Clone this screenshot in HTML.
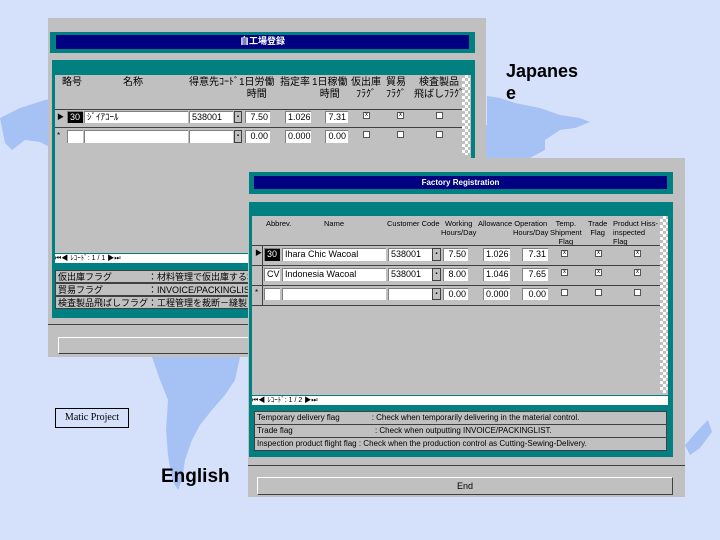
<!DOCTYPE html>
<html><head><meta charset="utf-8">
<style>
*{margin:0;padding:0;box-sizing:border-box}
body{width:720px;height:540px;background:#d5e1fb;position:relative;overflow:hidden;font-family:"Liberation Sans","Noto Sans CJK JP",sans-serif}
.a{position:absolute}
.g{background:#c0c0c0}
.t{background:#008080}
.n{background:#000080;color:#fff;font-size:8px;text-align:center;font-weight:bold;line-height:13px}
.w{background:#fff;border-top:1px solid #808080;border-left:1px solid #808080;font-size:9px;line-height:11px;padding-left:2px;white-space:nowrap;overflow:hidden}
.r{text-align:right;padding-right:2px}
.h{font-size:7.5px;line-height:9px;text-align:center;white-space:nowrap;color:#000}
.cb{width:7px;height:7px;background:#fff;border:1px solid #555;font-size:6px;line-height:5px;text-align:center}
.dd{background:#c0c0c0;border:1px solid #404040;font-size:6px;text-align:center;line-height:10px}
.info{font-size:8px;line-height:12px;white-space:nowrap;overflow:hidden;padding-left:2px;border:1px solid #404040;background:#c0c0c0}
.chk{background:repeating-conic-gradient(#fff 0 25%,#c0c0c0 0 50%) 0 0/6px 6px}
.ln{background:#404040;height:1px}
.jh{font-size:10px;line-height:12px}
</style></head><body>
<svg class="a" style="left:0;top:0" width="720" height="540">
<path fill="#a6c2f5" d="M0,118 L20,108 L45,100 L55,98 L55,150 L40,142 L25,140 L12,150 L5,143 Z"/>
<path fill="#a6c2f5" d="M487,96 L500,98 L515,103 L540,108 L560,115 L580,118 L590,122 L575,128 L560,130 L545,140 L545,150 L530,158 L505,160 L487,160 Z"/>
<path fill="#a6c2f5" d="M470,130 L487,125 L487,160 L468,160 Z"/>
<path fill="#a6c2f5" d="M152,357 L240,357 L235,380 L225,395 L212,410 L200,425 L192,440 L185,460 L182,480 L178,490 L172,480 L168,455 L166,430 L168,400 L160,380 Z"/>
<path fill="#a6c2f5" d="M685,445 L700,428 L708,420 L712,432 L700,448 L690,455 Z"/>
</svg>

<!-- Window 1 -->
<div class="a g" style="left:48px;top:18px;width:438px;height:339px"></div>
<div class="a t" style="left:50px;top:32px;width:425px;height:21px"></div>
<div class="a n" style="left:56px;top:35px;width:413px;height:14px;font-size:9px">自工場登録</div>
<div class="a t" style="left:52px;top:60px;width:423px;height:258px"></div>
<div class="a g" style="left:55px;top:75px;width:416px;height:178px"></div>
<div class="a h jh" style="left:62px;top:77px">略号</div>
<div class="a h jh" style="left:123px;top:77px">名称</div>
<div class="a h jh" style="left:189px;top:77px">得意先ｺｰﾄﾞ</div>
<div class="a h jh" style="left:239px;top:77px">1日労働<br>時間</div>
<div class="a h jh" style="left:280px;top:77px">指定率</div>
<div class="a h jh" style="left:312px;top:77px">1日稼働<br>時間</div>
<div class="a h jh" style="left:351px;top:77px">仮出庫<br>ﾌﾗｸﾞ</div>
<div class="a h jh" style="left:386px;top:77px">貿易<br>ﾌﾗｸﾞ</div>
<div class="a h jh" style="left:414px;top:77px">検査製品<br>飛ばしﾌﾗｸﾞ</div>
<div class="a ln" style="left:55px;top:109px;width:407px"></div>
<div class="a ln" style="left:55px;top:127px;width:407px"></div>
<div class="a" style="left:57px;top:112px;font-size:7px">▶</div>
<div class="a" style="left:57px;top:131px;font-size:8px">*</div>
<div class="a w" style="left:67px;top:111px;width:16px;height:12px;background:#000;color:#fff">30</div>
<div class="a w" style="left:84px;top:111px;width:104px;height:12px">ｼﾞｲｱｺｰﾙ</div>
<div class="a w" style="left:189px;top:111px;width:44px;height:12px">538001</div>
<div class="a dd" style="left:234px;top:111px;width:8px;height:12px">▪</div>
<div class="a w r" style="left:245px;top:111px;width:25px;height:12px">7.50</div>
<div class="a w r" style="left:285px;top:111px;width:26px;height:12px">1.026</div>
<div class="a w r g" style="left:325px;top:111px;width:23px;height:12px">7.31</div>
<div class="a cb" style="left:363px;top:112px">x</div><div class="a cb" style="left:397px;top:112px">x</div><div class="a cb" style="left:436px;top:112px"></div>
<div class="a w" style="left:67px;top:130px;width:16px;height:13px"></div>
<div class="a w" style="left:84px;top:130px;width:104px;height:13px"></div>
<div class="a w" style="left:189px;top:130px;width:44px;height:13px"></div>
<div class="a dd" style="left:234px;top:130px;width:8px;height:13px">▪</div>
<div class="a w r" style="left:245px;top:130px;width:25px;height:13px">0.00</div>
<div class="a w r" style="left:285px;top:130px;width:26px;height:13px">0.000</div>
<div class="a w r g" style="left:325px;top:130px;width:23px;height:13px">0.00</div>
<div class="a cb" style="left:363px;top:131px"></div><div class="a cb" style="left:397px;top:131px"></div><div class="a cb" style="left:436px;top:131px"></div>
<div class="a chk" style="left:462px;top:75px;width:8px;height:80px"></div>
<div class="a" style="left:55px;top:254px;width:420px;height:9px;background:#fff;font-size:7px;line-height:9px">⏮◀ ﾚｺｰﾄﾞ: 1 / 1 ▶⏭</div>
<div class="a info" style="left:55px;top:270px;width:416px;height:13px;font-size:9px">仮出庫フラグ　　　　：材料管理で仮出庫する場合</div>
<div class="a info" style="left:55px;top:283px;width:416px;height:13px;font-size:9px">貿易フラグ　　　　　：INVOICE/PACKINGLIST</div>
<div class="a info" style="left:55px;top:296px;width:416px;height:13px;font-size:9px">検査製品飛ばしフラグ：工程管理を裁断－縫製－</div>
<div class="a ln" style="left:48px;top:324px;width:438px"></div>
<div class="a" style="left:58px;top:337px;width:420px;height:17px;border:1px solid #404040;border-top-color:#fff;border-left-color:#fff"></div>

<div class="a" style="left:506px;top:60px;font-size:18px;font-weight:bold;line-height:22px;color:#000">Japanes<br>e</div>
<div class="a" style="left:55px;top:408px;width:74px;height:20px;border:1px solid #000;font-family:'Liberation Serif',serif;font-size:10px;line-height:18px;text-align:center">Matic Project</div>
<div class="a" style="left:161px;top:466px;font-size:19px;font-weight:bold;color:#000">English</div>

<!-- Window 2 -->
<div class="a g" style="left:248px;top:158px;width:437px;height:339px"></div>
<div class="a t" style="left:249px;top:172px;width:424px;height:22px"></div>
<div class="a n" style="left:254px;top:176px;width:413px;height:13px">Factory Registration</div>
<div class="a t" style="left:249px;top:202px;width:424px;height:255px"></div>
<div class="a g" style="left:252px;top:216px;width:416px;height:179px"></div>
<div class="a h" style="left:266px;top:219px">Abbrev.</div>
<div class="a h" style="left:324px;top:219px">Name</div>
<div class="a h" style="left:387px;top:219px">Customer Code</div>
<div class="a h" style="left:441px;top:219px">Working<br>Hours/Day</div>
<div class="a h" style="left:478px;top:219px">Allowance</div>
<div class="a h" style="left:513px;top:219px">Operation<br>Hours/Day</div>
<div class="a h" style="left:550px;top:219px">Temp.<br>Shipment<br>Flag</div>
<div class="a h" style="left:588px;top:219px">Trade<br>Flag</div>
<div class="a h" style="left:613px;top:219px;text-align:left">Product Hiss-<br>inspected<br>Flag</div>
<div class="a ln" style="left:252px;top:245px;width:408px"></div>
<div class="a ln" style="left:252px;top:265px;width:408px"></div>
<div class="a ln" style="left:252px;top:285px;width:408px"></div>
<div class="a ln" style="left:252px;top:305px;width:408px"></div>
<div class="a" style="left:262px;top:245px;width:1px;height:60px;background:#404040"></div>
<div class="a" style="left:255px;top:248px;font-size:7px">▶</div>
<div class="a" style="left:255px;top:288px;font-size:8px">*</div>
<div class="a w" style="left:264px;top:248px;width:16px;height:13px;background:#000;color:#fff">30</div>
<div class="a w" style="left:282px;top:248px;width:104px;height:13px">Ihara Chic Wacoal</div>
<div class="a w" style="left:388px;top:248px;width:44px;height:13px">538001</div>
<div class="a dd" style="left:432px;top:248px;width:9px;height:13px">▪</div>
<div class="a w r" style="left:443px;top:248px;width:25px;height:13px">7.50</div>
<div class="a w r" style="left:483px;top:248px;width:27px;height:13px">1.026</div>
<div class="a w r g" style="left:522px;top:248px;width:26px;height:13px">7.31</div>
<div class="a cb" style="left:561px;top:250px">x</div><div class="a cb" style="left:595px;top:250px">x</div><div class="a cb" style="left:634px;top:250px">x</div>
<div class="a w" style="left:264px;top:268px;width:16px;height:13px">CV</div>
<div class="a w" style="left:282px;top:268px;width:104px;height:13px">Indonesia Wacoal</div>
<div class="a w" style="left:388px;top:268px;width:44px;height:13px">538001</div>
<div class="a dd" style="left:432px;top:268px;width:9px;height:13px">▪</div>
<div class="a w r" style="left:443px;top:268px;width:25px;height:13px">8.00</div>
<div class="a w r" style="left:483px;top:268px;width:27px;height:13px">1.046</div>
<div class="a w r g" style="left:522px;top:268px;width:26px;height:13px">7.65</div>
<div class="a cb" style="left:561px;top:269px">x</div><div class="a cb" style="left:595px;top:269px">x</div><div class="a cb" style="left:634px;top:269px">x</div>
<div class="a w" style="left:264px;top:288px;width:16px;height:12px"></div>
<div class="a w" style="left:282px;top:288px;width:104px;height:12px"></div>
<div class="a w" style="left:388px;top:288px;width:44px;height:12px"></div>
<div class="a dd" style="left:432px;top:288px;width:9px;height:12px">▪</div>
<div class="a w r" style="left:443px;top:288px;width:25px;height:12px">0.00</div>
<div class="a w r" style="left:483px;top:288px;width:27px;height:12px">0.000</div>
<div class="a w r g" style="left:522px;top:288px;width:26px;height:12px">0.00</div>
<div class="a cb" style="left:561px;top:289px"></div><div class="a cb" style="left:595px;top:289px"></div><div class="a cb" style="left:634px;top:289px"></div>
<div class="a chk" style="left:660px;top:216px;width:8px;height:177px"></div>
<div class="a" style="left:252px;top:396px;width:416px;height:9px;background:#fff;font-size:7px;line-height:9px">⏮◀ ﾚｺｰﾄﾞ: 1 / 2 ▶⏭</div>
<div class="a info" style="left:254px;top:411px;width:413px;height:14px">Temporary delivery flag　　　　: Check when temporarily delivering in the material control.</div>
<div class="a info" style="left:254px;top:424px;width:413px;height:14px">Trade flag　　　　　　　　　　 : Check when outputting INVOICE/PACKINGLIST.</div>
<div class="a info" style="left:254px;top:437px;width:413px;height:14px">Inspection product flight flag : Check when the production control as Cutting-Sewing-Delivery.</div>
<div class="a ln" style="left:248px;top:465px;width:437px"></div>
<div class="a" style="left:257px;top:477px;width:416px;height:18px;border:1px solid #404040;border-top-color:#fff;border-left-color:#fff;font-size:9px;line-height:16px;text-align:center">End</div>
</body></html>
